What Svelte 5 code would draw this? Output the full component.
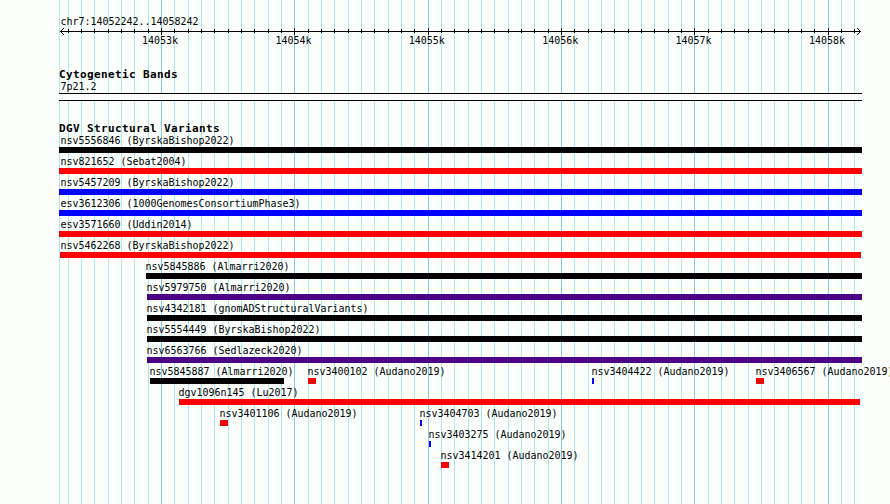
<script lang="ts">
	type Variant = { name: string; x: number; width: number; color: string; labelX?: number };

	const height = 504;
	const gridLines = Array.from({ length: 60 }, (_, i) => i - 7)
		.map((n) => ({ x: Math.round(161 + (n * 40) / 3), major: n % 10 === 0 }))
		.filter((line) => line.x < 860);

	const majors = gridLines.filter((line) => line.major);

	const rows: Variant[][] = [
		[{ name: 'nsv5556846 (ByrskaBishop2022)', x: 59, width: 803, color: 'black', labelX: 60 }],
		[{ name: 'nsv821652 (Sebat2004)', x: 59, width: 803, color: 'red', labelX: 60 }],
		[{ name: 'nsv5457209 (ByrskaBishop2022)', x: 59, width: 803, color: 'blue', labelX: 60 }],
		[{ name: 'esv3612306 (1000GenomesConsortiumPhase3)', x: 59, width: 803, color: 'blue', labelX: 60 }],
		[{ name: 'esv3571660 (Uddin2014)', x: 59, width: 803, color: 'red', labelX: 60 }],
		[{ name: 'nsv5462268 (ByrskaBishop2022)', x: 60, width: 801, color: 'red' }],
		[{ name: 'nsv5845886 (Almarri2020)', x: 146, width: 716, color: 'black', labelX: 145 }],
		[{ name: 'nsv5979750 (Almarri2020)', x: 147, width: 715, color: 'indigo', labelX: 146 }],
		[{ name: 'nsv4342181 (gnomADStructuralVariants)', x: 147, width: 715, color: 'black', labelX: 146 }],
		[{ name: 'nsv5554449 (ByrskaBishop2022)', x: 147, width: 715, color: 'black', labelX: 146 }],
		[{ name: 'nsv6563766 (Sedlazeck2020)', x: 147, width: 715, color: 'indigo', labelX: 146 }],
		[
			{ name: 'nsv5845887 (Almarri2020)', x: 150, width: 134, color: 'black', labelX: 149 },
			{ name: 'nsv3400102 (Audano2019)', x: 308, width: 8, color: 'red', labelX: 307 },
			{ name: 'nsv3404422 (Audano2019)', x: 592, width: 2, color: 'blue', labelX: 591 },
			{ name: 'nsv3406567 (Audano2019)', x: 756, width: 8, color: 'red', labelX: 755 }
		],
		[{ name: 'dgv1096n145 (Lu2017)', x: 179, width: 681, color: 'red', labelX: 178 }],
		[
			{ name: 'nsv3401106 (Audano2019)', x: 220, width: 8, color: 'red', labelX: 219 },
			{ name: 'nsv3404703 (Audano2019)', x: 420, width: 2, color: 'blue', labelX: 419 }
		],
		[{ name: 'nsv3403275 (Audano2019)', x: 429, width: 2, color: 'blue', labelX: 428 }],
		[{ name: 'nsv3414201 (Audano2019)', x: 441, width: 8, color: 'red', labelX: 440 }]
	];
</script>

<main class="browser">
	<svg class="grid" width="890" {height} shape-rendering="crispEdges">
		<rect class="minor" x="59" y="0" width="1" {height} />
		{#each gridLines as line}
			<rect class={line.major ? 'major' : 'minor'} x={line.x} y="0" width="1" {height} />
		{/each}
	</svg>

	<section class="ruler">
		<div class="region">chr7:14052242..14058242</div>
		<svg class="axis" width="890" height="8" shape-rendering="crispEdges">
			<rect x="60" y="3" width="801" height="1" />
			{#each gridLines as line}
				<rect x={line.x} y={line.major ? 0 : 1} width="1" height={line.major ? 7 : 4} />
			{/each}
			<path d="M60 3h1v1h-1zM61 2h1v3h-1zM62 1h1v1h-1zM62 5h1v1h-1zM63 0h1v1h-1zM63 6h1v1h-1z" />
			<path d="M860 3h1v1h-1zM859 2h1v3h-1zM858 1h1v1h-1zM858 5h1v1h-1zM857 0h1v1h-1zM857 6h1v1h-1z" />
		</svg>
		<div class="ticks">
			{#each majors as line, i}
				<span class="tick">{14053 + i}k</span>
			{/each}
		</div>
	</section>

	<section class="cytobands">
		<h2>Cytogenetic Bands</h2>
		<div class="band-name">7p21.2</div>
		<div class="band"></div>
	</section>

	<section class="variants">
		<h2>DGV Structural Variants</h2>
		{#each rows as row}
			<div class="row">
				{#each row as variant}
					<div class="variant" style="margin-left: {variant.x}px">
						<span class="label" style="margin-left: {(variant.labelX ?? variant.x) - variant.x}px">{variant.name}</span>
						<div class="bar {variant.color}" style="width: {variant.width}px"></div>
					</div>
				{/each}
			</div>
		{/each}
	</section>
</main>

<style>
	:global(body) {
		margin: 0;
		overflow: hidden;
	}

	.browser {
		position: relative;
		width: 890px;
		height: 504px;
		overflow: hidden;
		background: #fcfefc;
		color: #000;
		font: 10px/12px 'DejaVu Sans Mono', monospace;
		letter-spacing: -0.02px;
		white-space: nowrap;
	}

	.grid {
		position: absolute;
		inset: 0;
	}

	.minor {
		fill: #acebec;
	}

	.major {
		fill: #84cbec;
	}

	section {
		position: relative;
	}

	.ruler {
		height: 68px;
		padding-top: 15px;
		box-sizing: border-box;
	}

	.region,
	.band-name {
		padding-left: 60.4px;
		height: 12px;
		line-height: 14px;
	}

	.axis {
		display: block;
		margin-top: 1px;
	}

	.ticks {
		display: flex;
		margin-top: -1px;
		padding-left: 142px;
	}

	.tick {
		flex: 0 0 133.4px;
	}

	h2 {
		margin: 0;
		padding-left: 59px;
		height: 12px;
		font-size: 11px;
		line-height: 14px;
		font-weight: bold;
		letter-spacing: 0.378px;
	}

	.cytobands {
		height: 54px;
	}

	.band {
		width: 803px;
		height: 8px;
		margin: 1px 0 0 59px;
		box-sizing: border-box;
		border: solid #000;
		border-width: 1px 0;
		background: #fcfefc;
	}

	.row {
		display: grid;
		height: 21px;
	}

	.variant {
		grid-area: 1 / 1;
	}

	.label {
		display: block;
		height: 13px;
		padding-left: 0.4px;
		line-height: 14px;
	}

	.bar {
		height: 6px;
	}

	.black {
		background: #040204;
	}

	.red {
		background: #fc0204;
	}

	.blue {
		background: #0402fc;
	}

	.indigo {
		background: #4c0284;
	}
</style>
